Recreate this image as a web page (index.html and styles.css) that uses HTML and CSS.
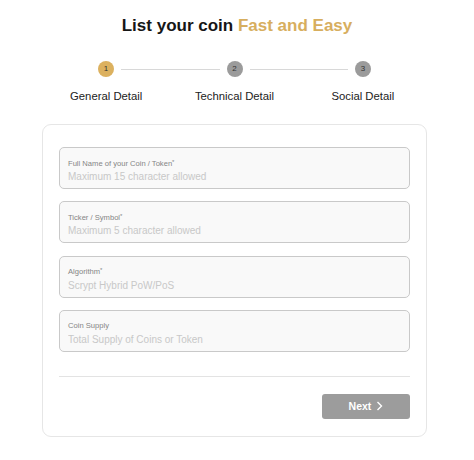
FILE: index.html
```html
<!DOCTYPE html>
<html>
<head>
<meta charset="utf-8">
<link rel="stylesheet" href="styles.css">
</head>
<body>
<div class="page">
  <h1 class="title">List your coin <span class="accent">Fast and Easy</span></h1>
  <div class="stepper">
    <div class="step-track">
      <span class="dot active">1</span>
      <span class="bar"></span>
      <span class="dot">2</span>
      <span class="bar"></span>
      <span class="dot">3</span>
    </div>
    <div class="step-labels">
      <span>General Detail</span>
      <span>Technical Detail</span>
      <span>Social Detail</span>
    </div>
  </div>
  <form class="card">
    <div class="fields">
      <label class="field">
        <span class="field-label">Full Name of your Coin / Token<sup>*</sup></span>
        <input class="field-input" type="text" placeholder="Maximum 15 character allowed">
      </label>
      <label class="field">
        <span class="field-label">Ticker / Symbol<sup>*</sup></span>
        <input class="field-input" type="text" placeholder="Maximum 5 character allowed">
      </label>
      <label class="field">
        <span class="field-label">Algorithm<sup>*</sup></span>
        <input class="field-input" type="text" placeholder="Scrypt Hybrid PoW/PoS">
      </label>
      <label class="field">
        <span class="field-label">Coin Supply</span>
        <input class="field-input" type="text" placeholder="Total Supply of Coins or Token">
      </label>
    </div>
    <hr class="divider">
    <div class="actions">
      <button type="button" class="next-btn">Next <svg class="chev" width="7" height="10" viewBox="0 0 7 10"><path d="M1.5 1 L5.5 5 L1.5 9" fill="none" stroke="#fff" stroke-width="1.4"/></svg></button>
    </div>
  </form>
</div>
</body>
</html>
```
FILE: styles.css
```css
* { box-sizing: border-box; }
html, body { margin: 0; padding: 0; background: #fff; }
body {
  font-family: "Liberation Sans", Arial, sans-serif;
  color: #1a1a1a;
  width: 474px;
}
.page { padding: 15px 0 0 0; }
.title {
  margin: 0;
  text-align: center;
  font-size: 17px;
  line-height: 22px;
  font-weight: bold;
  color: #161616;
}
.accent { color: #d7ae5e; }

.stepper { margin: 24px 47px 0 42px; width: 385px; }
.step-track {
  display: flex;
  align-items: center;
  padding: 0 56px;
}
.dot {
  width: 16px;
  height: 16px;
  border-radius: 50%;
  background: #9b9b9b;
  color: #333;
  font-size: 8px;
  line-height: 16px;
  text-align: center;
  flex: none;
}
.dot.active { background: #dcb15f; }
.bar {
  flex: 1;
  height: 1px;
  background: #d8d8d8;
  margin: 0 7px;
}
.step-labels {
  display: grid;
  grid-template-columns: 1fr 1fr 1fr;
  margin-top: 12px;
  font-size: 11.3px;
  line-height: 14px;
  color: #222;
  text-align: center;
}

.card {
  margin: 21px 0 0 42px;
  width: 385px;
  border: 1px solid #e6e6e6;
  border-radius: 9px;
  padding: 22px 16px 17px 16px;
}
.fields { display: flex; flex-direction: column; gap: 12.33px; }
.field {
  display: flex;
  flex-direction: column;
  height: 42px;
  border: 1px solid #c9c9c9;
  border-radius: 5px;
  background: #f9f9f9;
  padding: 10.5px 8px 0 8px;
}
.field-label {
  font-size: 7.6px;
  line-height: 9px;
  color: #858585;
}
.field-label sup { font-size: 6px; vertical-align: 2px; line-height: 0; color: #858585; }
.field-input {
  border: 0;
  background: transparent;
  padding: 0;
  margin: 2.5px 0 0 0;
  font-family: "Liberation Sans", Arial, sans-serif;
  font-size: 10px;
  line-height: 14px;
  height: 14px;
  outline: none;
  color: #333;
}
.field-input::placeholder { color: #c8c8c8; }

.divider {
  margin: 24px 0 0 0;
  border: 0;
  border-top: 1px solid #e3e3e3;
  height: 0;
}
.actions { display: flex; justify-content: flex-end; margin-top: 17px; }
.next-btn {
  width: 88px;
  height: 25px;
  border: 0;
  border-radius: 3px;
  background: #9c9c9c;
  color: #fff;
  font-family: "Liberation Sans", Arial, sans-serif;
  font-size: 10.5px;
  font-weight: bold;
  display: flex;
  align-items: center;
  justify-content: center;
  gap: 5px;
  padding: 0;
}
.chev { display: block; }
```
